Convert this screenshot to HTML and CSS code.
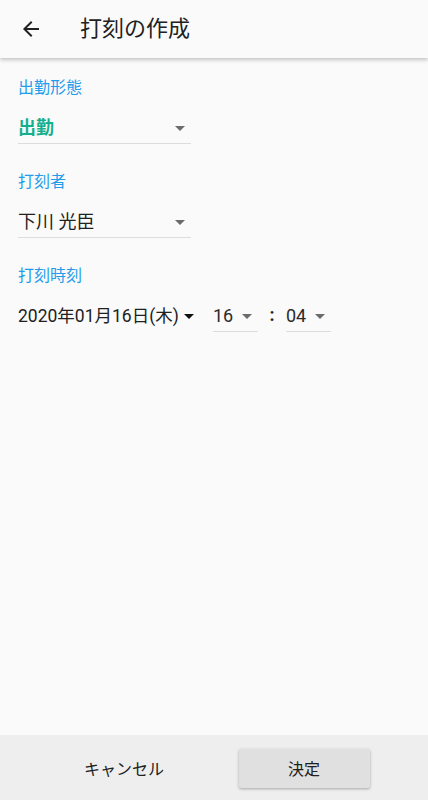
FILE: index.html
```html
<!DOCTYPE html>
<html lang="ja">
<head>
<meta charset="utf-8">
<link rel="stylesheet" href="styles.css">
</head>
<body>
<div class="app">
  <header class="toolbar">
    <button class="back" aria-label="戻る">
      <svg width="24" height="24" viewBox="0 0 24 24"><path d="M20 11H7.83l5.59-5.59L12 4l-8 8 8 8 1.41-1.41L7.83 13H20v-2z" fill="#212121"/></svg>
    </button>
    <h1 class="title">打刻の作成</h1>
  </header>
  <main class="content">
    <div class="field">
      <div class="label">出勤形態</div>
      <div class="select wide">
        <span class="value strong">出勤</span>
        <span class="caret"></span>
      </div>
    </div>
    <div class="field">
      <div class="label">打刻者</div>
      <div class="select wide">
        <span class="value">下川 光臣</span>
        <span class="caret"></span>
      </div>
    </div>
    <div class="field">
      <div class="label">打刻時刻</div>
      <div class="time-row">
        <div class="select date">
          <span class="value">2020年01月16日(木)</span>
          <span class="caret dark"></span>
        </div>
        <div class="select small">
          <span class="value">16</span>
          <span class="caret"></span>
        </div>
        <span class="colon">:</span>
        <div class="select small">
          <span class="value">04</span>
          <span class="caret"></span>
        </div>
      </div>
    </div>
  </main>
  <footer class="actions">
    <button class="btn text">キャンセル</button>
    <button class="btn raised">決定</button>
  </footer>
</div>
</body>
</html>
```
FILE: styles.css
```css
* { box-sizing: border-box; }
html, body { margin: 0; padding: 0; }
body {
  background: #fafafa;
  font-family: Roboto, "Noto Sans CJK JP", sans-serif;
  color: #212121;
}
.app {
  height: 800px;
  display: flex;
  flex-direction: column;
}
.toolbar {
  height: 58px;
  flex: none;
  display: flex;
  align-items: center;
  background: #fafafa;
  box-shadow: 0 2px 4px rgba(0,0,0,0.22);
  position: relative;
  z-index: 1;
}
.back {
  border: 0;
  background: none;
  padding: 0;
  margin-left: 19px;
  width: 24px;
  height: 24px;
  display: flex;
}
.title {
  margin: 0 0 0 37px;
  font-size: 22px;
  font-weight: 400;
  line-height: 28px;
  color: #212121;
}
.content {
  flex: 1;
  padding: 0 18px;
}
.field { margin-top: 28px; }
.field:first-child { margin-top: 20px; }
.label {
  font-size: 16px;
  line-height: 20px;
  color: #239ceb;
}
.select {
  display: flex;
  align-items: center;
  padding: 18px 0 3px;
  border-bottom: 1px solid #dcdcdc;
}
.select .value {
  font-size: 18px;
  line-height: 24px;
  flex: 1;
  white-space: nowrap;
}
.value.strong {
  color: #12b08f;
  font-weight: 700;
}
.wide { width: 173px; padding-right: 6px; }
.caret {
  width: 0;
  height: 0;
  border-left: 5px solid transparent;
  border-right: 5px solid transparent;
  border-top: 5px solid #6b6b6b;
  margin-top: 1px;
}
.caret.dark { border-top-color: #111; margin-left: 5px; }
.time-row {
  display: flex;
  align-items: flex-end;
}
.date {
  border-bottom-color: transparent;
  width: 176px;
  margin-right: 19px;
}
.date .value { flex: none; font-size: 17.5px; }
.small {
  width: 45px;
  padding-right: 8px;
}
.small .value { flex: none; margin-right: 9px; color: #2a2a2a; }
.colon {
  width: 28px;
  text-align: center;
  font-size: 18px;
  font-weight: 700;
  color: #212121;
  line-height: 24px;
  padding-bottom: 5px;
}
.actions {
  flex: none;
  height: 65px;
  background: #eeeeee;
  display: flex;
  align-items: center;
  justify-content: center;
  gap: 49px;
  padding-top: 1px;
}
.btn {
  width: 131px;
  height: 39px;
  border: 0;
  border-radius: 2px;
  font-family: Roboto, "Noto Sans CJK JP", sans-serif;
  font-size: 16px;
  color: #212121;
  background: transparent;
}
.btn.raised {
  background: #e0e0e0;
  box-shadow: 0 1px 3px rgba(0,0,0,0.3);
}
```
